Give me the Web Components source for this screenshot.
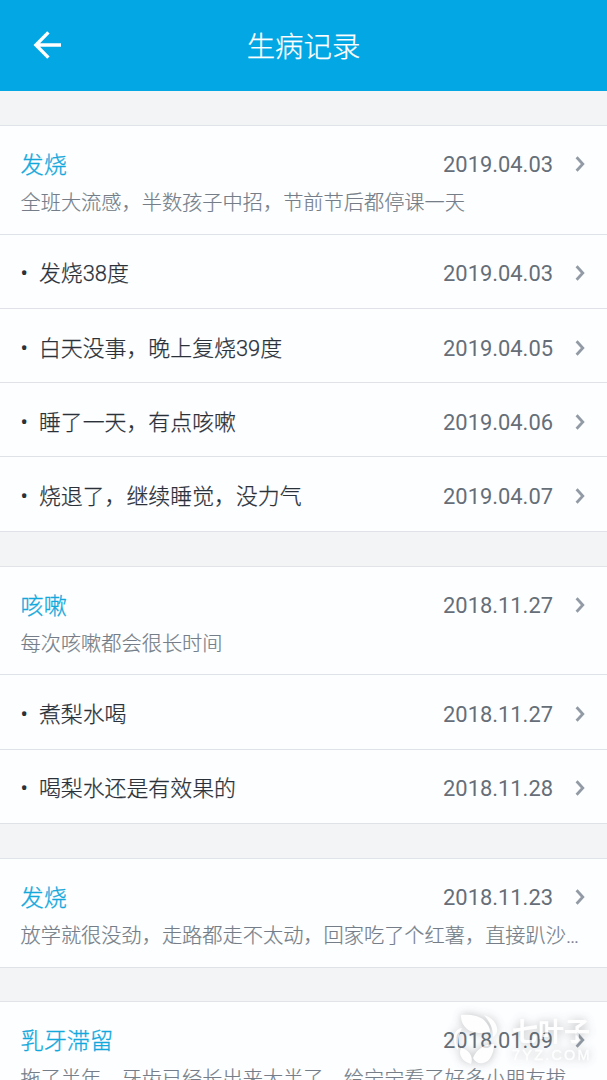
<!DOCTYPE html>
<html lang="zh-CN">
<head>
<meta charset="utf-8">
<title>生病记录</title>
<style>
html,body{margin:0;height:1080px;overflow:hidden;background:#f3f4f6}
body{font-family:Roboto,"Noto Sans CJK SC",sans-serif;font-weight:300;position:relative}
</style>
</head>
<body>
<app-bar>生病记录</app-bar>
<main>
<record-group>
<record-head date="2019.04.03" note="全班大流感，半数孩子中招，节前节后都停课一天">发烧</record-head>
<record-item date="2019.04.03">发烧38度</record-item>
<record-item date="2019.04.05">白天没事，晚上复烧39度</record-item>
<record-item date="2019.04.06">睡了一天，有点咳嗽</record-item>
<record-item date="2019.04.07">烧退了，继续睡觉，没力气</record-item>
</record-group>
<record-group>
<record-head date="2018.11.27" note="每次咳嗽都会很长时间">咳嗽</record-head>
<record-item date="2018.11.27">煮梨水喝</record-item>
<record-item date="2018.11.28">喝梨水还是有效果的</record-item>
</record-group>
<record-group>
<record-head date="2018.11.23" note="放学就很没劲，走路都走不太动，回家吃了个红薯，直接趴沙…">发烧</record-head>
</record-group>
<record-group>
<record-head date="2018.01.09" note="拖了半年，牙齿已经长出来大半了，给宁宁看了好多小朋友拔…">乳牙滞留</record-head>
</record-group>
</main>
<site-mark></site-mark>
<script>
const define = (name, html, setup) => customElements.define(name, class extends HTMLElement {
  connectedCallback() {
    if (this.shadowRoot) return;
    const t = document.createElement('template');
    t.innerHTML = html;
    const root = this.attachShadow({mode: 'open'});
    root.append(t.content.cloneNode(true));
    if (setup) setup(this, root);
  }
});

define('app-bar', `<style>
:host{display:grid;grid-template-columns:94px 1fr 94px;align-items:center;height:91px;background:#02a7e3;color:#fff}
svg{display:block;margin:0 0 2px 32px}
h1{margin:0;text-align:center;font-size:28.4px;font-weight:300;line-height:40px;padding-top:4px;-webkit-text-stroke:.25px currentColor}
</style>
<svg width="32" height="30" viewBox="0 0 32 30" fill="none" stroke="#fff" stroke-width="3.4"><path d="M16.4 2.4 3.9 15l12.5 12.6M4 15h25"/></svg>
<h1><slot></slot></h1>`);

define('record-group', `<style>
:host{display:block;margin-top:34px;border-top:1px solid #e0e3e8;background:#fdfeff}
:host(:last-child){margin-top:33.5px}
</style><slot></slot>`);

define('date-link', `<style>
:host{display:flex;align-items:center;flex:none;color:#666e78;font-size:21.9px;font-weight:400;line-height:30px;-webkit-text-stroke:0}
svg{display:block;margin:0 20px 2px 21px}
</style>
<slot></slot><svg width="13" height="18" viewBox="0 0 13 18" fill="none" stroke="#929ba5" stroke-width="2.8"><path d="m2.6 2.2 6.2 6.8-6.2 6.8"/></svg>`);

define('record-head', `<style>
:host{display:block;box-sizing:border-box;height:108.7px;padding:23px 0 0 20.5px;border-bottom:1px solid #dfe2e7}
.row{display:flex;justify-content:space-between;align-items:center;height:32px}
.title{font-size:23.2px;line-height:32px;color:#13a8dc;-webkit-text-stroke:.3px currentColor}
.note{font-size:20.22px;line-height:30px;margin-top:7px;color:#757e88;white-space:nowrap;-webkit-text-stroke:.2px currentColor}
</style>
<div class="row"><span class="title"><slot></slot></span><date-link></date-link></div><div class="note"></div>`,
(host, root) => {
  root.querySelector('date-link').textContent = host.getAttribute('date');
  root.querySelector('.note').textContent = host.getAttribute('note');
});

define('record-item', `<style>
:host{display:flex;align-items:center;box-sizing:border-box;height:74.25px;padding:6px 0 0 20.5px;border-bottom:1px solid #dfe2e7;font-size:21.9px;line-height:32px;color:#2b3139;-webkit-text-stroke:.25px currentColor}
.dot{width:18.4px;font-weight:400;-webkit-text-stroke:0}
.text{flex:1}
</style>
<span class="dot">•</span><span class="text"><slot></slot></span><date-link></date-link>`,
(host, root) => { root.querySelector('date-link').textContent = host.getAttribute('date'); });

define('site-mark', `<style>
:host{position:absolute;left:450px;top:1010px;display:flex;gap:12px;color:#fff;opacity:.76;filter:drop-shadow(0 0 5px rgba(80,85,90,.5))}
svg{display:block;width:50px;height:56px;flex:none}
.words{display:flex;flex-direction:column;padding-top:4px}
.name{font:700 26px/32px "Noto Sans CJK SC",sans-serif}
.url{font:400 14.5px/18px "Liberation Sans",sans-serif;letter-spacing:2.2px;white-space:nowrap;-webkit-text-stroke:.3px currentColor}
</style>
<svg viewBox="0 0 50 56" fill="currentColor"><path d="M11 5C18 4 29 5 34 10c4 4 6 8 6 12-9 2-19 1-24-4-4-4-5-8-5-13Z"/><path d="M34 5c7 2 12 7 13 13 1 4-1 7-4 9 0-9-3-15-9-22Z"/><path d="M12 18C6 19 3 24 4 30c0 4 1 7 4 10 0-8 0-14 4-22Z"/><path d="M11 38c7 1 13 8 10 16-7-2-11-7-11-12 0-2 1-3 1-4Z"/><path d="M44 34c-8 0-17 4-21 14 2 4 6 6 10 5 7-1 11-10 11-19Z"/></svg>
<div class="words"><span class="name">七叶子</span><span class="url">7YZ.COM</span></div>`);
</script>
</body>
</html>
